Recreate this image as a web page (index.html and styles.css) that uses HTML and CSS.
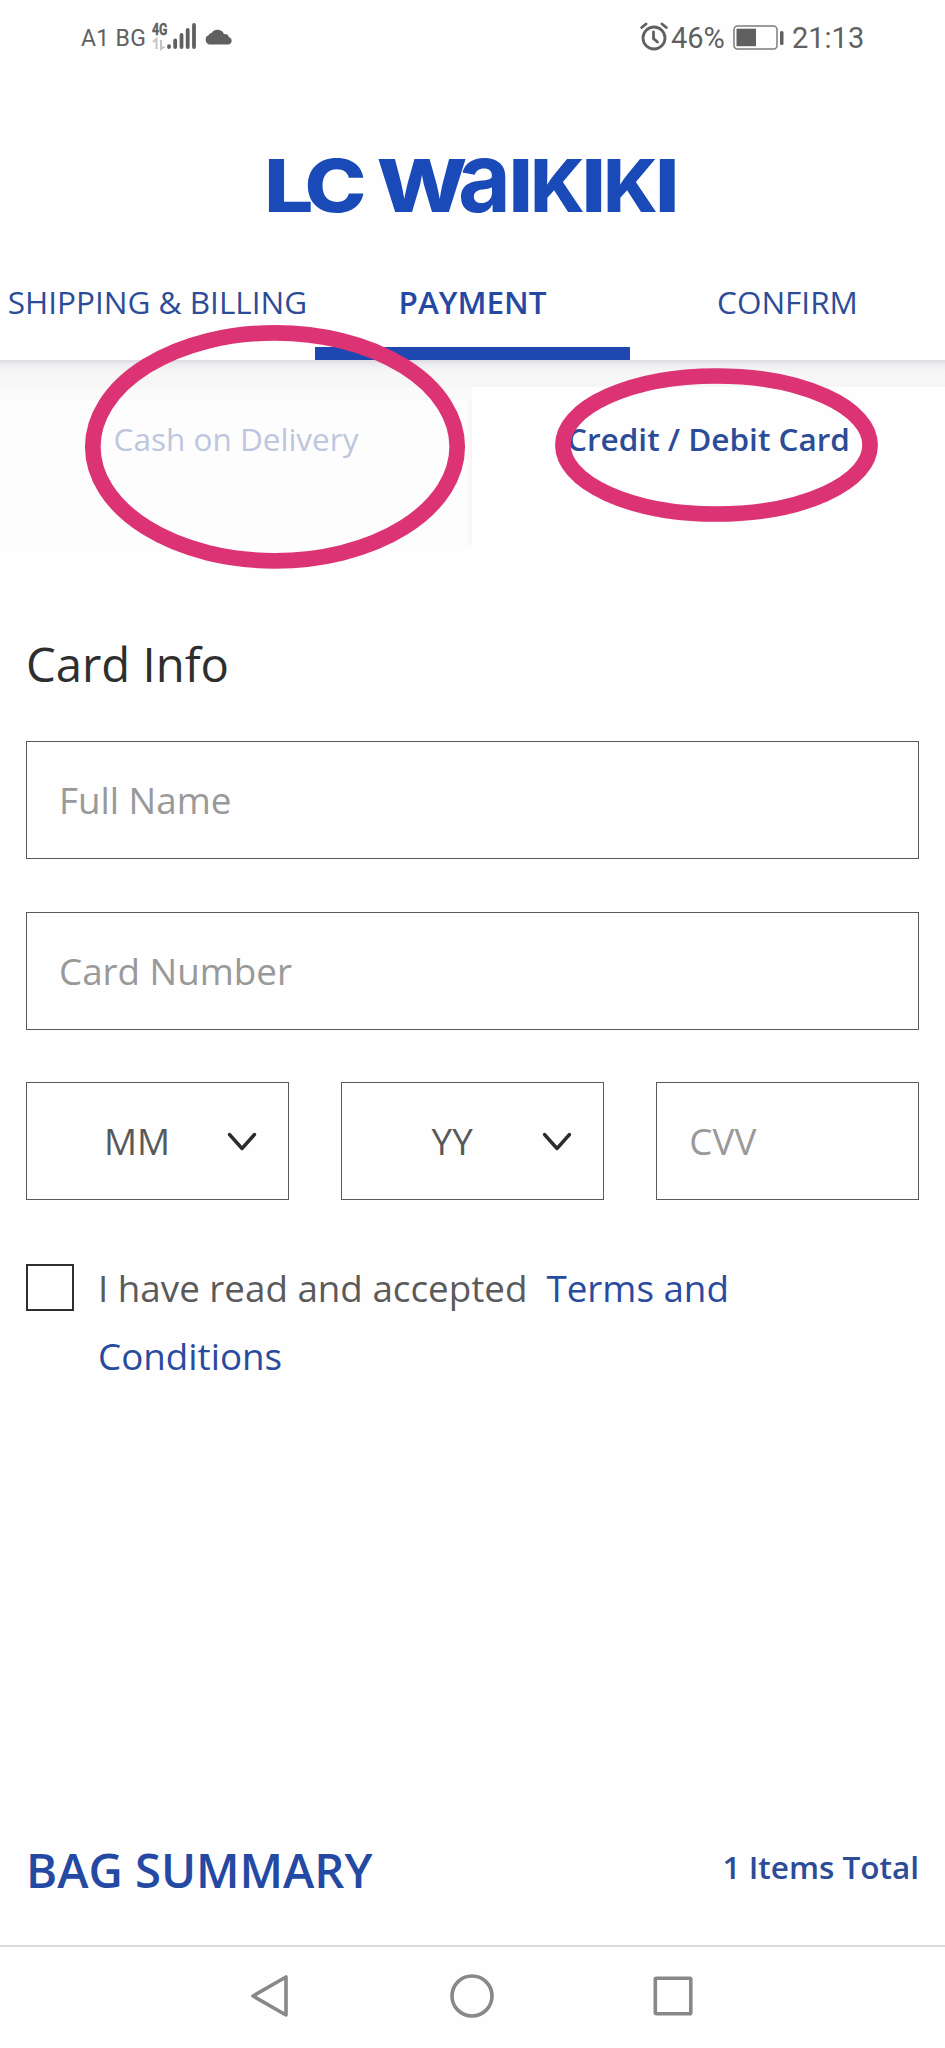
FILE: index.html
```html
<!DOCTYPE html>
<html lang="en">
<head>
<meta charset="utf-8">
<title>LC Waikiki – Payment</title>
<link rel="stylesheet" href="styles.css">
</head>
<body>
<div class="screen">
  <header class="status">
    <div class="status-left">
      <span class="carrier">A1 BG</span>
      <svg class="signal" width="46" height="36" viewBox="0 -6 46 36">
        <text class="net" x="0" y="13" textLength="15.5" lengthAdjust="spacingAndGlyphs">4G</text>
        <g fill="none" stroke="#c4c4c4" stroke-width="2"><path d="M1 20l3.500-3V27M12.500 24.500L9 27V18"/></g>
        <g stroke="#606060" stroke-width="3.800" stroke-linecap="round"><path d="M17 24.200V25M23.200 18.500V25M29.500 13V25M35.700 8V25M42 3V25"/></g>
      </svg>
      <svg class="cloud" width="28" height="16" viewBox="0 0 28 16"><path fill="#606060" d="M5 15.500A4.800 4.800 0 0 1 3.600 6.300C4.500 4.700 5.500 4.200 6.600 4.100A7 7 0 0 1 19 5.200C21.600 4.800 23.300 6 24 8.300A3.700 3.700 0 0 1 23.500 15.500Z"/></svg>
    </div>
    <div class="status-right">
      <svg width="28" height="29" viewBox="0 0 28 29" fill="none" stroke="#606060" stroke-linecap="round">
        <circle cx="14" cy="16" r="11" stroke-width="2.800"/><path d="M13.500 10V16.500L17.500 20" stroke-width="2.800"/><path d="M1.700 5.500L6 2M22 2l4.300 3.500" stroke-width="2.800"/>
      </svg>
      <span class="percent">46%</span>
      <svg class="battery" width="52" height="26" viewBox="0 0 52 26">
        <rect x="1" y="1" width="43" height="23" rx="3.500" fill="none" stroke="#7c7c7c" stroke-width="1.500"/>
        <rect x="3.500" y="3.700" width="19.500" height="17.500" fill="#606060"/><rect x="47" y="6" width="3.500" height="14" rx="1.500" fill="#606060"/>
      </svg>
      <span class="clock">21:13</span>
    </div>
  </header>

  <div class="brand">
    <svg width="440" height="130" viewBox="-10 -38 440 130" role="img" aria-label="LC Waikiki">
      <g class="logo">
        <text y="62" x="-2" textLength="49.500" lengthAdjust="spacingAndGlyphs">L</text>
        <text y="62" x="38.500" textLength="62" lengthAdjust="spacingAndGlyphs">C</text>
        <text y="62" x="110.500" textLength="91" lengthAdjust="spacingAndGlyphs">W</text>
        <text class="logo-a" y="62" x="192" textLength="53" lengthAdjust="spacingAndGlyphs">a</text>
        <text y="62" x="242.500" textLength="24.500" lengthAdjust="spacingAndGlyphs">I</text>
        <text y="62" x="264.500">K</text>
        <text y="62" x="315.500" textLength="24.500" lengthAdjust="spacingAndGlyphs">I</text>
        <text y="62" x="337.500">K</text>
        <text y="62" x="389" textLength="24.500" lengthAdjust="spacingAndGlyphs">I</text>
      </g>
    </svg>
  </div>

  <nav class="steps">
    <span class="step">SHIPPING &amp; BILLING</span>
    <span class="step active">PAYMENT</span>
    <span class="step">CONFIRM</span>
  </nav>

  <div class="methods">
    <div class="method disabled">Cash on Delivery</div>
    <div class="method selected">Credit / Debit Card</div>
    <svg class="marks" width="945" height="270" viewBox="0 310 945 270" fill="none" stroke="#dc3374" stroke-width="15.700">
      <ellipse cx="275" cy="446.800" rx="182.200" ry="114"/>
      <ellipse cx="716.500" cy="445" rx="153.600" ry="69"/>
    </svg>
  </div>

  <main class="card-form">
    <h1 class="title">Card Info</h1>
    <div class="field">Full Name</div>
    <div class="field">Card Number</div>
    <div class="row">
      <div class="field select"><span class="value">MM</span><svg width="30" height="20" viewBox="0 0 30 20"><path d="M2.500 2.500L15 16.500L27.500 2.500" class="chevron"/></svg></div>
      <div class="field select"><span class="value">YY</span><svg width="30" height="20" viewBox="0 0 30 20"><path d="M2.500 2.500L15 16.500L27.500 2.500" class="chevron"/></svg></div>
      <div class="field">CVV</div>
    </div>
    <div class="terms">
      <span class="checkbox"></span>
      <p class="terms-text">I have read and accepted&nbsp; <a class="link">Terms and<br>Conditions</a></p>
    </div>
  </main>

  <section class="summary">
    <span class="summary-title">BAG SUMMARY</span>
    <span class="summary-total">1 Items Total</span>
  </section>

  <footer class="softkeys">
    <svg width="44" height="48" viewBox="0 0 44 48"><path d="M5 24L38 5V43Z" class="key"/></svg>
    <svg width="48" height="48" viewBox="0 0 48 48"><circle cx="24" cy="24" r="20" class="key"/></svg>
    <svg width="44" height="48" viewBox="0 0 44 48"><rect x="4.300" y="6.300" width="35.500" height="35.500" rx="1" class="key"/></svg>
  </footer>
</div>
</body>
</html>
```
FILE: styles.css
```css
* { box-sizing: border-box; }
body { margin: 0; background: #fefefe; font-family: "Open Sans", "Noto Sans", sans-serif; }
svg { display: block; flex: none; }
.screen { width: 945px; height: 2048px; display: flex; flex-direction: column; overflow: hidden; }

.status { height: 76px; flex: none; display: flex; justify-content: space-between; padding: 0 79px 0 81px; font-family: Roboto, sans-serif; color: #606060; }
.status-left, .status-right { display: flex; align-items: flex-start; white-space: nowrap; }
.carrier { width: 71px; font-size: 23px; line-height: 28px; padding-top: 25px; letter-spacing: 0.3px; }
.signal { margin-top: 16px; }
.net { font: 700 17px Roboto, sans-serif; fill: #606060; stroke: #606060; stroke-width: 0.4px; }
.cloud { margin: 29px 0 0 7px; }
.status-right svg { margin-top: 22px; }
.percent { width: 56px; margin-left: 3px; font-size: 29px; line-height: 40px; padding-top: 18px; letter-spacing: -0.1px; }
.status-right .battery { margin: 25px 0 0 6px; }
.clock { width: 74px; margin-left: 7px; font-size: 29px; line-height: 40px; padding-top: 18px; }

.brand { height: 167px; flex: none; padding: 36px 0 0 256px; }
.logo { font: 800 73.500px Inter, sans-serif; fill: #1a4ab8; }
.logo-a { font-size: 97px; font-weight: 700; }

.steps { height: 117px; flex: none; display: grid; grid-template-columns: repeat(3, 1fr); background: #fefefe; }
.step { line-height: 117px; text-align: center; font-size: 31.500px; color: #2c4c98; white-space: nowrap; }
.step.active { font-weight: 600; color: #2449a3; box-shadow: inset 0 -13px #1f47b2; }

.methods { position: relative; height: 185px; flex: none; display: grid; grid-template-columns: 472px 473px; padding-top: 27px; background: linear-gradient(#dcdde2, #eeeef1 5px, #f6f6f6 12px, #f6f6f6 27px, transparent 27px); }
.method { line-height: 103px; font-size: 31.500px; text-align: center; color: #2c4c98; white-space: nowrap; }
.disabled { color: #bdc6df; background: linear-gradient(#fafafa 13px, transparent 13px), linear-gradient(to left, #f6f6f6, #fdfdfd 6px); }
.selected { font-weight: 600; background: #fefefe; }
.marks { position: absolute; left: 0; top: -50px; }

.card-form { padding: 87px 26px 0; display: flex; flex-direction: column; height: 1241px; flex: none; }
.title { margin: 0 0 45px; font-size: 47.250px; font-weight: 400; line-height: 64px; color: #2e2e2e; }
.field { height: 118px; flex: none; margin-bottom: 52.500px; padding: 0 0 0 32px; border: 1px solid #5a5a5a; display: flex; align-items: center; font-size: 36.750px; color: #999; white-space: nowrap; }
.row { display: grid; grid-template-columns: repeat(3, 1fr); gap: 52.500px; }
.select { color: #58595b; padding-left: 0; }
.value { width: 220px; text-align: center; }
.select svg { margin: 2px 0 0 -20px; }
.chevron { fill: none; stroke: #2c2c2c; stroke-width: 3.400; stroke-linecap: round; stroke-linejoin: round; }
.terms { display: flex; }
.checkbox { width: 47.500px; height: 47.500px; flex: none; margin-top: 11px; border: 2.500px solid #2e2e2e; }
.terms-text { margin: 1px 0 0 24.500px; font-size: 36.750px; line-height: 68.250px; color: #5a5a5a; white-space: nowrap; }
.link { color: #284b9e; }

.summary { height: 161px; flex: none; display: flex; justify-content: space-between; align-items: flex-start; padding: 51px 26px 0; font-weight: 600; color: #2449a3; border-bottom: 2px solid #dcdcdc; }
.summary-title { font-size: 47.250px; line-height: 66px; }
.summary-total { font-size: 31.500px; line-height: 60px; color: #2c4c98; }

.softkeys { display: flex; padding: 25px 0 0 248px; }
.softkeys svg + svg { margin-left: 156px; }
.softkeys svg:last-child { margin-left: 155px; }
.key { fill: none; stroke: #888; stroke-width: 3.600; stroke-linejoin: round; }
```
